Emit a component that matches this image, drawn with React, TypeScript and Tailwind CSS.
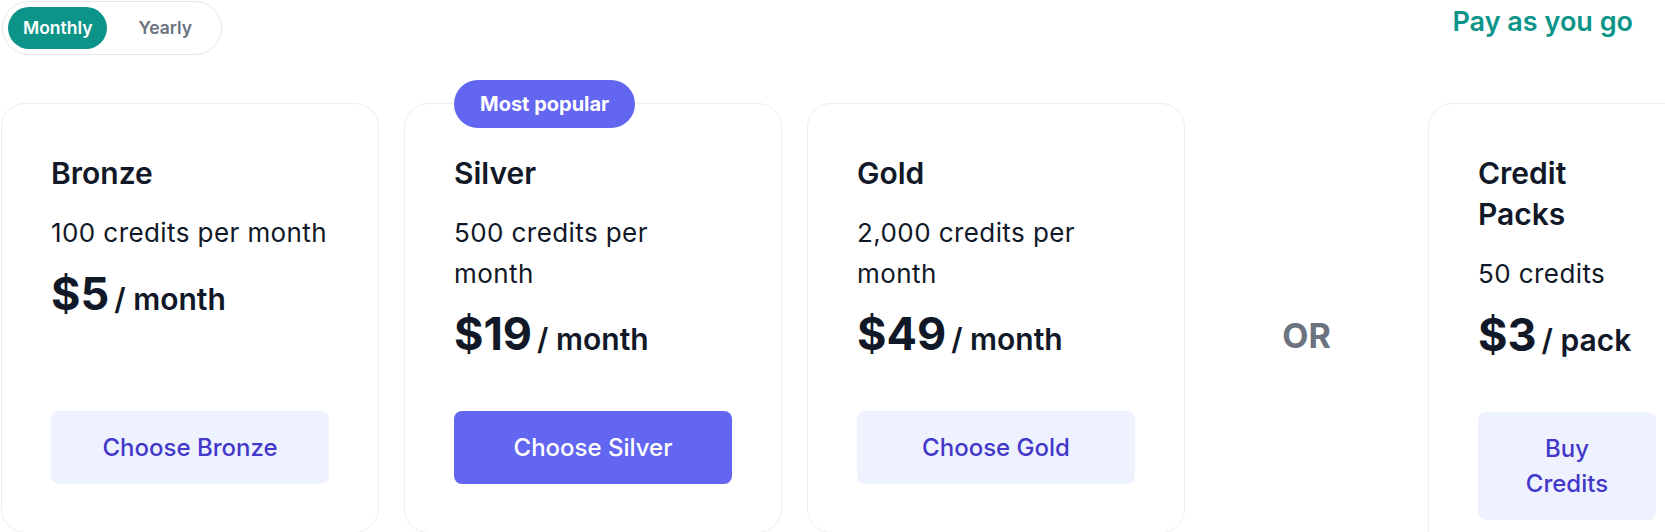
import React from "react";

type Plan = {
  name: React.ReactNode;
  desc: string;
  price: string;
  unit: string;
  cta: React.ReactNode;
  primary?: boolean;
  badge?: string;
};

const plans: Plan[] = [
  { name: "Bronze", desc: "100 credits per month", price: "$5", unit: "/ month", cta: "Choose Bronze" },
  { name: "Silver", desc: "500 credits per month", price: "$19", unit: "/ month", cta: "Choose Silver", primary: true, badge: "Most popular" },
  { name: "Gold", desc: "2,000 credits per month", price: "$49", unit: "/ month", cta: "Choose Gold" },
];

function Card({ plan, className = "" }: { plan: Plan; className?: string }) {
  return (
    <div
      className={`relative flex flex-col rounded-[24px] border border-[#eceef2] bg-white px-[49px] pt-[49px] pb-[48px] ${className}`}
    >
      {plan.badge && (
        <div className="absolute -top-[24px] left-[49px] flex h-[48px] items-center rounded-full bg-[#6366f1] px-[26px] text-[20px] font-bold text-white">
          {plan.badge}
        </div>
      )}
      <div className="flex-1">
        <h3 className="text-[30px] font-semibold leading-[41px] text-[#111827]">{plan.name}</h3>
        <p className="mr-[-3px] mt-[19px] text-[26px] leading-[40.6px] tracking-[0.016em] text-[#111827]">{plan.desc}</p>
        <div className="mt-[15px] flex items-baseline text-[#111827]">
          <span className="text-[45px] font-bold leading-[50px]">{plan.price}</span>
          <span className="ml-[5px] text-[30px] font-semibold">{plan.unit}</span>
        </div>
      </div>
      <button
        className={`mt-[49px] w-full rounded-[8px] px-[25px] py-[19px] text-[24px] font-medium leading-[35px] ${
          plan.primary ? "bg-[#6366f1] text-white" : "bg-[#eef2ff] text-[#4338ca]"
        }`}
      >
        {plan.cta}
      </button>
    </div>
  );
}

export default function App() {
  return (
    <div className="h-[532px] w-full overflow-hidden bg-white font-['Inter',sans-serif]">
      <div className="flex items-start">
        <div className="ml-[2px] mt-[1px] flex items-center gap-[16px] rounded-full border border-[#e5e7eb] py-[5px] pl-[5px] pr-[14px]">
          <span className="flex h-[42px] items-center rounded-full bg-[#0d9488] px-[15px] text-[17.5px] font-semibold text-white">
            Monthly
          </span>
          <span className="flex h-[42px] items-center px-[15px] text-[17.5px] font-semibold text-[#6b7280]">
            Yearly
          </span>
        </div>
        <div className="ml-auto mr-[32px] mt-[4px] text-[27px] font-semibold leading-[36px] text-[#0d9488]">
          Pay as you go
        </div>
      </div>
      <div className="mt-[48px] flex items-start">
        <div className="ml-[1px] grid grid-cols-[378px_378px_378px] gap-[25px]">
          {plans.map((p, i) => (
            <Card key={i} plan={p} />
          ))}
        </div>
        <div className="flex w-[243px] shrink-0 items-center justify-center self-stretch text-[34px] font-bold text-[#6b7280]">
          OR
        </div>
        <Card
          className="w-[278px] shrink-0"
          plan={{ name: "Credit Packs", desc: "50 credits", price: "$3", unit: "/ pack", cta: "Buy Credits" }}
        />
      </div>
    </div>
  );
}
